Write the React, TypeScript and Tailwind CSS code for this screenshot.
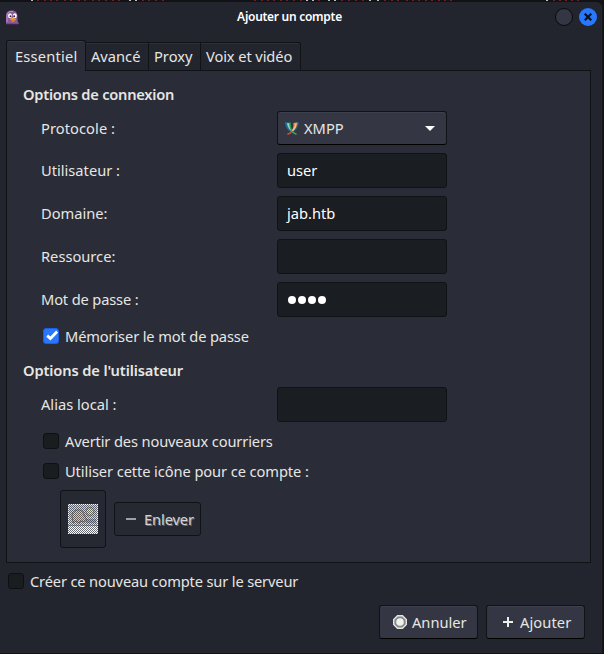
import React from "react";

function Check({ checked = false }: { checked?: boolean }) {
  return (
    <span
      className={`flex size-4 shrink-0 items-center justify-center rounded-[3px] border ${
        checked ? "border-[#1c5fe0] bg-[#2777ff]" : "border-[#0e1013] bg-[#1a1d20]"
      }`}
    >
      {checked && (
        <svg viewBox="0 0 14 14" className="size-3.5">
          <path d="M3.2 6.6 6.4 9.5 13.2 2.6" fill="none" stroke="#fff" strokeWidth="2.8" />
        </svg>
      )}
    </span>
  );
}

function CheckRow({ label, checked, className }: { label: string; checked?: boolean; className: string }) {
  return (
    <label className={`flex h-5 items-center gap-1.5 ${className}`}>
      <Check checked={checked} />
      <span>{label}</span>
    </label>
  );
}

function Row({ label, className, labelClass = "pb-px", children }: { label: string; className: string; labelClass?: string; children: React.ReactNode }) {
  return (
    <div className={`flex items-center pl-[34px] ${className}`}>
      <span className={`w-[236px] ${labelClass}`}>{label}</span>
      {children}
    </div>
  );
}

function Field({ children }: { children?: React.ReactNode }) {
  return (
    <div className="flex h-[35px] w-[170px] items-center rounded-[3px] border border-[#101216] bg-[#1a1d21] pb-px pl-[9px] text-white">
      {children}
    </div>
  );
}

function Tab({ label, className }: { label: string; className: string }) {
  return (
    <div
      className={`flex h-[28px] items-center border-t border-r border-[#101216] bg-[#23252e] shadow-[inset_0_1px_0_#2d303a] ${className}`}
    >
      <span className="pb-px">{label}</span>
    </div>
  );
}

const fragments = [31, 37, 44, 50, 56, 64, 70, 78, 84, 92, 98, 105, 112, 118, 129, 135, 142, 148, 155, 162, 254, 261, 267, 273, 280, 286, 293, 300, 306, 312, 318, 328, 334, 341, 348, 355, 362, 369, 377, 384, 391, 397, 406, 412, 418, 425, 431, 438, 444, 450, 546, 553, 559, 565, 571, 577];
const bright = [31, 129, 135, 306, 312, 328, 334, 369, 377, 546];

function Penguin() {
  return (
    <svg viewBox="0 0 13 15" className="h-[15px] w-[13px]">
      <path d="M0 14V6C0 2 2 .5 6 .5S11.5 3 11.5 7v4l1.5 3Z" fill="#8b5a9c" />
      <path d="M1 12V5C1.5 2 4 1 7 1.5" fill="none" stroke="#bb8fc6" strokeWidth="1" />
      <ellipse cx="4" cy="5.8" rx="2" ry="2.5" fill="#fff" />
      <ellipse cx="8.8" cy="5.8" rx="2" ry="2.5" fill="#fff" />
      <circle cx="4.5" cy="6.2" r="1" fill="#302337" />
      <circle cx="8.2" cy="6.2" r="1" fill="#302337" />
      <path d="M3.8 9 6.5 7.5 10.2 9.2 7 12Z" fill="#f79d28" />
      <path d="M5 10.2h4" stroke="#c26619" strokeWidth=".7" />
      <path d="M0 14.2h12.5" stroke="#4b2853" strokeWidth="1" />
    </svg>
  );
}

function XmppLogo() {
  return (
    <svg viewBox="0 0 14 13" className="h-[13px] w-[14px]">
      <path d="M0 0 5 .8C5 5 6 8.5 9.5 11 3.5 10 .5 6 0 0Z" fill="#1d7099" />
      <path d="M2 1 4.6 1.2C4.6 5 6 7.5 8 9.8 4.6 8.5 2.5 5 2 1Z" fill="#8fd3c4" />
      <path d="M5 .5C4.8 4 6 8 8.5 10.5" fill="none" stroke="#2e9b45" strokeWidth="1.4" />
      <path d="M14 0 9 .8C9 5 8 8.5 4.5 11 10.5 10 13.5 6 14 0Z" fill="#24607d" />
      <path d="M12.5.6 8.4 1C9 5 7.5 8 5.5 10.5 9.5 9 12.2 5 12.5.6Z" fill="#f08a4c" />
      <path d="M11 1.5C10.8 5 9 7.5 7.5 9" fill="none" stroke="#f7c49a" strokeWidth="1.2" />
      <path d="M2.5 12.2 6.5 10.4" stroke="#e2492f" strokeWidth="1.5" />
      <path d="M7.5 10 11.5 12.4" stroke="#34a847" strokeWidth="1.5" />
    </svg>
  );
}

function BuddyPicture() {
  return (
    <svg viewBox="0 0 30 30" className="size-[30px]">
      <defs>
        <pattern id="stipple" width="2" height="2" patternUnits="userSpaceOnUse">
          <rect width="1" height="1" fill="#303440" />
          <rect x="1" y="1" width="1" height="1" fill="#303440" />
        </pattern>
      </defs>
      <path d="M0 0h30v30H0Z" fill="#fff" />
      <path d="M1 1h28v20H1Z" fill="#c6d6e8" />
      <path d="M1 13h28v8H1Z" fill="#d8dcda" />
      <path d="M18 15h10v4H18Z" fill="#9db3c9" />
      <path d="M4 12c0-8 12-8 12-1l3 5-3 2-3-1-2 2-3-2-3 2Z" fill="#edc799" stroke="#9c7a52" strokeWidth="1" />
      <circle cx="22" cy="7.5" r="4" fill="#f3e69c" stroke="#a99b50" strokeWidth="1" />
      <path d="M0 21.5h30" stroke="#98a5b6" />
      <path d="M0 0h30v30H0Z" fill="url(#stipple)" fillOpacity=".72" shapeRendering="crispEdges" />
    </svg>
  );
}

export default function App() {
  return (
    <div className="flex h-[654px] w-[604px] flex-col overflow-hidden bg-[#111216] font-['Noto_Sans',sans-serif] text-[14.67px] leading-5 whitespace-nowrap text-[#e6e6e3]">
      <svg viewBox="0 0 604 2" className="h-0.5 w-full shrink-0">
        {fragments.map((x) => (
          <rect key={x} x={x} width="2" height="1" fill={bright.includes(x) ? "#bdbdbd" : "#692226"} />
        ))}
      </svg>
      <div className="flex h-[651px] w-[603px] flex-col rounded-tr-md border-r border-[#15171c] bg-[#23252e]">
        <header className="flex h-[38px] shrink-0 items-start pl-1.5">
          <div className="w-[13px] pt-2">
            <Penguin />
          </div>
          <h1 className="ml-[218px] flex w-[105px] justify-center pt-[5px] text-[12px] font-semibold tracking-[-0.28px] text-white">
            Ajouter un compte
          </h1>
          <div className="ml-[213px] flex gap-1.5 pt-1.5">
            <span className="size-[18px] rounded-full border border-[#08090b] bg-[#343743]" />
            <span className="flex size-[18px] items-center justify-center rounded-full bg-[#2777ff]">
              <svg viewBox="0 0 8 8" className="size-2">
                <path d="m.7.7 6.6 6.6m0-6.6L.7 7.3" stroke="#0b1020" strokeWidth="2.2" />
              </svg>
            </span>
          </div>
        </header>

        <nav className="z-10 flex shrink-0 items-end pl-1.5">
          <div className="-mb-px flex h-[31px] w-[80px] items-center rounded-t-[3px] border border-b-0 border-[#101216] bg-[#2a2c37] pb-px pl-2 tracking-[0.2px] shadow-[inset_0_1px_0_#343743]">
            Essentiel
          </div>
          <Tab label="Avancé" className="w-[63px] pl-[5px]" />
          <Tab label="Proxy" className="w-[52px] pl-[5px]" />
          <Tab label="Voix et vidéo" className="w-[100px] rounded-tr-[3px] pl-[5px] tracking-[-0.1px]" />
        </nav>

        <main className="ml-1.5 flex h-[493px] w-[585px] shrink-0 flex-col border border-[#101216] bg-[#2a2c37] pt-[13px]">
          <h2 className="h-5 pl-4 font-semibold tracking-[-0.24px]">Options de connexion</h2>
          <Row label="Protocole :" className="mt-[7px]" labelClass="tracking-[0.07px]">
            <div className="flex h-[34px] w-[170px] items-center rounded-[3px] border border-[#101216] border-b-black bg-[#343743] pr-[11px] pl-[7px] shadow-[inset_0_1px_0_#3d404d]">
              <XmppLogo />
              <span className="ml-[5px] flex-1">XMPP</span>
              <svg viewBox="0 0 10 5" className="h-[5px] w-2.5">
                <path d="M0 0h10L5 5Z" fill="#fff" />
              </svg>
            </div>
          </Row>
          <Row label="Utilisateur :" className="mt-2">
            <Field>user</Field>
          </Row>
          <Row label="Domaine:" className="mt-2">
            <Field>jab.htb</Field>
          </Row>
          <Row label="Ressource:" className="mt-2">
            <Field />
          </Row>
          <Row label="Mot de passe :" className="mt-2" labelClass="pb-px tracking-[-0.15px]">
            <Field>
              <span className="mt-px ml-px flex gap-0.5">
                {[0, 1, 2, 3].map((n) => (
                  <span key={n} className="size-2 rounded-full bg-white" />
                ))}
              </span>
            </Field>
          </Row>
          <CheckRow label="Mémoriser le mot de passe" checked className="mt-[9px] pl-9 tracking-[-0.14px]" />
          <h2 className="mt-3.5 h-5 pl-4 font-semibold tracking-[-0.12px]">Options de l'utilisateur</h2>
          <Row label="Alias local :" className="mt-[7px]">
            <Field />
          </Row>
          <CheckRow label="Avertir des nouveaux courriers" className="mt-[9px] pl-9 tracking-[-0.14px]" />
          <CheckRow label="Utiliser cette icône pour ce compte :" className="mt-2.5 pl-9 tracking-[-0.09px]" />
          <div className="mt-[9px] flex items-center gap-2 pl-[53px]">
            <div className="flex h-[58px] w-[46px] items-center justify-center rounded-[3px] border border-[#101216] bg-[#262832]">
              <BuddyPicture />
            </div>
            <div className="flex h-[34px] w-[87px] items-center rounded-[3px] border border-[#101216] bg-[#262832] pl-[11px]">
              <svg viewBox="0 0 10 2" className="h-0.5 w-2.5">
                <path d="M0 1h10" stroke="#c9c9c9" strokeWidth="1.5" />
              </svg>
              <span className="ml-2 tracking-[-0.12px] text-[#d4d4d4] [text-shadow:1px_1px_0_#696a70]">Enlever</span>
            </div>
          </div>
        </main>

        <CheckRow label="Créer ce nouveau compte sur le serveur" className="mt-2 pl-2 tracking-[-0.16px]" />
        <footer className="mt-3.5 flex gap-2 pl-[379px]">
          <div className="flex h-[34px] w-[99px] shrink-0 items-center rounded-[3px] border border-[#101216] border-b-black bg-[#343743] pl-[13px] shadow-[inset_0_1px_0_#3d404d]">
            <svg viewBox="0 0 14 14" className="size-3.5">
              <path d="M4.5.7h5l3.8 3.8v5l-3.8 3.8h-5L.7 9.5v-5Z" fill="#85878c" stroke="#e4e4e1" strokeWidth="1.4" />
              <circle cx="7" cy="7" r="3.8" fill="#f1f1ee" />
            </svg>
            <span className="ml-[5px]">Annuler</span>
          </div>
          <div className="flex h-[34px] w-[99px] shrink-0 items-center rounded-[3px] border border-[#101216] border-b-black bg-[#343743] pl-4 shadow-[inset_0_1px_0_#3d404d]">
            <svg viewBox="0 0 10 10" className="size-2.5">
              <path d="M0 5h10M5 0v10" stroke="#eeeeec" strokeWidth="2" />
            </svg>
            <span className="ml-[7px] tracking-[0.1px]">Ajouter</span>
          </div>
        </footer>
      </div>
    </div>
  );
}
